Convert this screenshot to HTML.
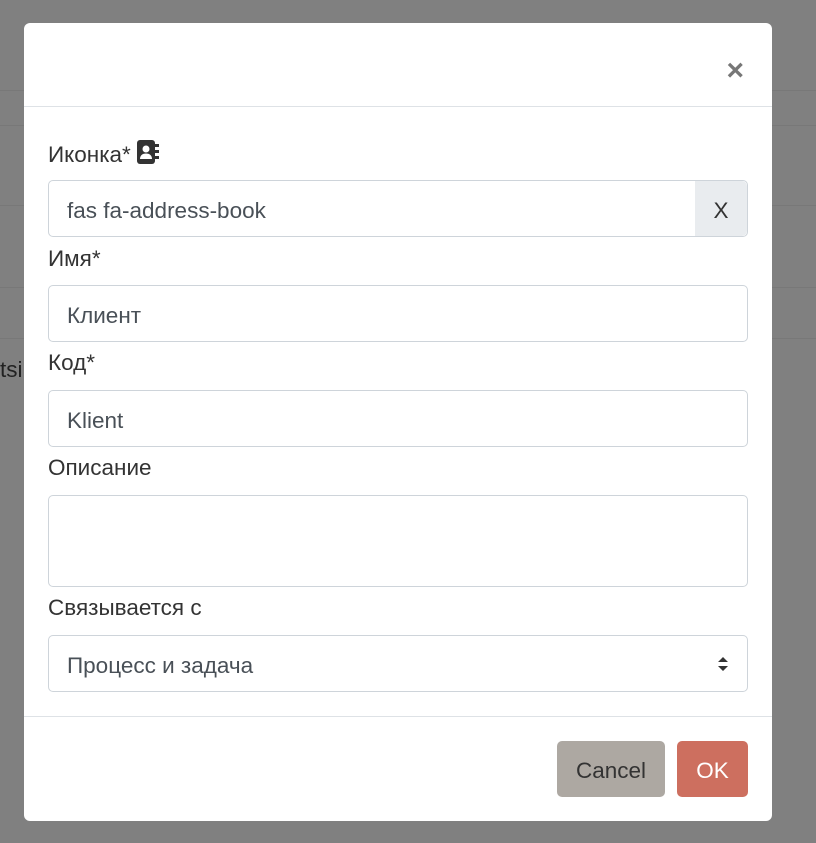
<!DOCTYPE html>
<html><head><meta charset="utf-8"><style>
*{box-sizing:border-box;margin:0;padding:0}
body{width:816px;height:843px;background:#808080;font-family:"Liberation Sans",sans-serif;position:relative;overflow:hidden;color:#333}
.bl{position:absolute;left:0;width:816px;height:1px;background:#787878}
.modal{position:absolute;left:24px;top:23px;width:748px;height:798px;background:#fff;border-radius:6px}
.hdr{height:84px;border-bottom:1px solid #dee2e6;position:relative}
.x{position:absolute;right:28px;top:33px;font-size:30px;color:#777;font-weight:bold;line-height:30px}
.lbl{position:absolute;left:24px;font-size:22.5px;color:#333}
.inp{position:absolute;left:24px;width:700px;height:57px;border:1px solid #ced4da;border-radius:5px;font-size:22.5px;color:#495057;padding:16px 18px;line-height:28px}
.btn{position:absolute;top:718px;height:56px;border-radius:5px;font-size:22.5px;line-height:60px;text-align:center}
.ftr{position:absolute;left:0;top:693px;width:748px;height:1px;background:#dee2e6}
</style></head><body>
<div class="bl" style="top:90px"></div><div class="bl" style="top:125px"></div><div class="bl" style="top:205px"></div><div class="bl" style="top:287px"></div><div class="bl" style="top:338px"></div>
<div style="position:absolute;left:0;top:357px;font-size:22.5px;color:#222">tsii</div>
<div class="modal">
<div class="hdr"><div class="x">×</div></div>
<div class="lbl" style="top:117px">Иконка* <svg width="22" height="24" viewBox="0 0 22 24" style="vertical-align:-2px"><rect x="0" y="0" width="18" height="24" rx="3" fill="#333"/><rect x="18" y="4" width="4" height="3" fill="#333"/><rect x="18" y="10" width="4" height="3" fill="#333"/><rect x="18" y="16" width="4" height="3" fill="#333"/><circle cx="9" cy="9" r="3.5" fill="#fff"/><path d="M3 19c0-4 3-5.5 6-5.5s6 1.5 6 5.5z" fill="#fff"/></svg></div>
<div class="inp" style="top:157px;border-radius:5px">fas fa-address-book</div>
<div style="position:absolute;left:671px;top:158px;width:52px;height:55px;background:#e9ecef;border-radius:0 5px 5px 0;font-size:22.5px;line-height:60px;text-align:center;color:#333">X</div>
<div class="lbl" style="top:223px">Имя*</div>
<div class="inp" style="top:262px">Клиент</div>
<div class="lbl" style="top:327px">Код*</div>
<div class="inp" style="top:367px">Klient</div>
<div class="lbl" style="top:432px">Описание</div>
<div class="inp" style="top:472px;height:92px"></div>
<div class="lbl" style="top:572px">Связывается с</div>
<div class="inp" style="top:612px">Процесс и задача<span style="position:absolute;right:18px;top:20px;font-size:0"><svg width="12" height="16" viewBox="0 0 12 16"><path d="M1 6L6 1L11 6Z M1 10L6 15L11 10Z" fill="#333"/></svg></span></div>
<div class="ftr"></div>
<div class="btn" style="left:533px;width:108px;background:#ada8a2;color:#333">Cancel</div>
<div class="btn" style="left:653px;width:71px;background:#cd6f5f;color:#fff">OK</div>
</div>
</body></html>
